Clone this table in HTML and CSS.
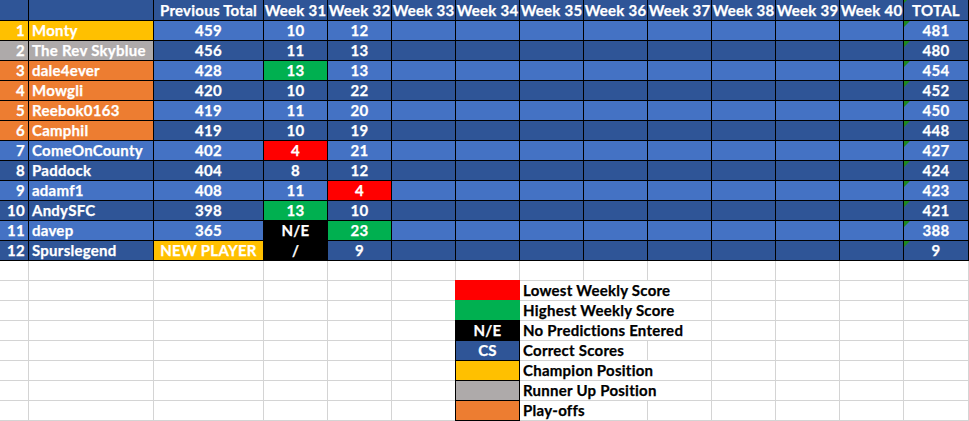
FILE: index.html
```html
<!DOCTYPE html>
<html>
<head>
<meta charset="utf-8">
<link rel="stylesheet" href="styles.css">
</head>
<body>
<div class="sheet">
  <div class="r h"><span></span><span></span><span>Previous Total</span><span>Week 31</span><span>Week 32</span><span>Week 33</span><span>Week 34</span><span>Week 35</span><span>Week 36</span><span>Week 37</span><span>Week 38</span><span>Week 39</span><span>Week 40</span><span class="tot hx">TOTAL</span></div>

  <div class="r l"><span class="rn y">1</span><span class="nm y">Monty</span><span>459</span><span>10</span><span>12</span><span></span><span></span><span></span><span></span><span></span><span></span><span></span><span></span><span class="tot">481</span></div>
  <div class="r d"><span class="rn g">2</span><span class="nm g">The Rev Skyblue</span><span>456</span><span>11</span><span>13</span><span></span><span></span><span></span><span></span><span></span><span></span><span></span><span></span><span class="tot">480</span></div>
  <div class="r l"><span class="rn o">3</span><span class="nm o">dale4ever</span><span>428</span><span class="gr">13</span><span>13</span><span></span><span></span><span></span><span></span><span></span><span></span><span></span><span></span><span class="tot">454</span></div>
  <div class="r d"><span class="rn o">4</span><span class="nm o">Mowgli</span><span>420</span><span>10</span><span>22</span><span></span><span></span><span></span><span></span><span></span><span></span><span></span><span></span><span class="tot">452</span></div>
  <div class="r l"><span class="rn o">5</span><span class="nm o">Reebok0163</span><span>419</span><span>11</span><span>20</span><span></span><span></span><span></span><span></span><span></span><span></span><span></span><span></span><span class="tot">450</span></div>
  <div class="r d"><span class="rn o">6</span><span class="nm o">Camphil</span><span>419</span><span>10</span><span>19</span><span></span><span></span><span></span><span></span><span></span><span></span><span></span><span></span><span class="tot">448</span></div>
  <div class="r l"><span class="rn">7</span><span class="nm">ComeOnCounty</span><span>402</span><span class="rd">4</span><span>21</span><span></span><span></span><span></span><span></span><span></span><span></span><span></span><span></span><span class="tot">427</span></div>
  <div class="r d"><span class="rn">8</span><span class="nm">Paddock</span><span>404</span><span>8</span><span>12</span><span></span><span></span><span></span><span></span><span></span><span></span><span></span><span></span><span class="tot">424</span></div>
  <div class="r l"><span class="rn">9</span><span class="nm">adamf1</span><span>408</span><span>11</span><span class="rd">4</span><span></span><span></span><span></span><span></span><span></span><span></span><span></span><span></span><span class="tot">423</span></div>
  <div class="r d"><span class="rn">10</span><span class="nm">AndySFC</span><span>398</span><span class="gr">13</span><span>10</span><span></span><span></span><span></span><span></span><span></span><span></span><span></span><span></span><span class="tot">421</span></div>
  <div class="r l"><span class="rn">11</span><span class="nm">davep</span><span>365</span><span class="bk">N/E</span><span class="gr">23</span><span></span><span></span><span></span><span></span><span></span><span></span><span></span><span></span><span class="tot">388</span></div>
  <div class="r d"><span class="rn">12</span><span class="nm">Spurslegend</span><span class="y">NEW PLAYER</span><span class="bk">/</span><span>9</span><span></span><span></span><span></span><span></span><span></span><span></span><span></span><span></span><span class="tot">9</span></div>

  <div class="r e"><span></span><span></span><span></span><span></span><span></span><span></span><span></span><span></span><span></span><span></span><span></span><span></span><span></span><span></span></div>
  <div class="r e"><span></span><span></span><span></span><span></span><span></span><span></span><span class="lg c-red"></span><span class="lt s3">Lowest Weekly Score</span><span></span><span></span><span></span><span></span></div>
  <div class="r e"><span></span><span></span><span></span><span></span><span></span><span></span><span class="lg c-green"></span><span class="lt s3">Highest Weekly Score</span><span></span><span></span><span></span><span></span></div>
  <div class="r e"><span></span><span></span><span></span><span></span><span></span><span></span><span class="lg c-black">N/E</span><span class="lt s3">No Predictions Entered</span><span></span><span></span><span></span><span></span></div>
  <div class="r e"><span></span><span></span><span></span><span></span><span></span><span></span><span class="lg c-cs">CS</span><span class="lt s2">Correct Scores</span><span></span><span></span><span></span><span></span><span></span></div>
  <div class="r e"><span></span><span></span><span></span><span></span><span></span><span></span><span class="lg c-yellow"></span><span class="lt s3">Champion Position</span><span></span><span></span><span></span><span></span></div>
  <div class="r e"><span></span><span></span><span></span><span></span><span></span><span></span><span class="lg c-grey"></span><span class="lt s3">Runner Up Position</span><span></span><span></span><span></span><span></span></div>
  <div class="r e"><span></span><span></span><span></span><span></span><span></span><span></span><span class="lg c-orange"></span><span class="lt s2">Play-offs</span><span></span><span></span><span></span><span></span><span></span></div>
</div>
</body>
</html>
```

FILE: styles.css
```css
html, body {
  margin: 0;
  padding: 0;
  background: #ffffff;
}

body {
  font-family: Lato, "Open Sans", "Liberation Sans", sans-serif;
  font-weight: 700;
  font-size: 15px;
  letter-spacing: 0.25px;
  -webkit-text-stroke: 0.25px currentColor;
  width: 969px;
  height: 421px;
  overflow: hidden;
}

.sheet {
  width: 969px;
}

.r {
  display: grid;
  grid-template-columns: 29px 125px 110px repeat(10, 64px) 65px;
  height: 20px;
}

.r > span {
  box-sizing: border-box;
  border-right: 1px solid #000;
  border-bottom: 1px solid #000;
  line-height: 19px;
  text-align: center;
  color: #ffffff;
  white-space: nowrap;
  overflow: visible;
}

.h {
  height: 21px;
  background: #2f5597;
}

.h > span {
  line-height: 20px;
}

.l { background: #4472c4; }
.d { background: #2f5597; }

.rn {
  text-align: right !important;
  padding-right: 3px;
}

.nm {
  text-align: left !important;
  padding-left: 3px;
}

.y { background: #ffc000; }
.g { background: #aeaaaa; }
.o { background: #ed7d31; }
.gr { background: #00b050; }
.rd { background: #ff0000; }
.bk { background: #000000; }

.tot {
  position: relative;
}

.tot::before {
  content: "";
  position: absolute;
  left: 0;
  top: 0;
  width: 0;
  height: 0;
  border-top: 6px solid #1e8a1e;
  border-right: 6px solid transparent;
}

.hx::before {
  border-top-width: 3px;
  border-right-width: 3px;
}

/* empty spreadsheet area */
.e {
  background: #ffffff;
}

.e > span {
  border-right-color: #d4d4d4;
  border-bottom-color: #d4d4d4;
}

/* legend */
.e > .lg {
  margin: -1px 0 0 -1px;
  border: 1px solid #000;
  line-height: 18px;
  position: relative;
}

.c-red { background: #ff0000; border-color: #ff0000 !important; }
.c-green { background: #00b050; border-color: #00b050 !important; }
.c-black { background: #000000; border-color: #000000 !important; }
.c-cs { background: #2f5597; }
.c-yellow { background: #ffc000; }
.c-grey { background: #aeaaaa; }
.c-orange { background: #ed7d31; }

.e > .lt {
  color: #000000;
  text-align: left;
  padding-left: 3px;
}

.s3 { grid-column: span 3; }
.s2 { grid-column: span 2; }
```
